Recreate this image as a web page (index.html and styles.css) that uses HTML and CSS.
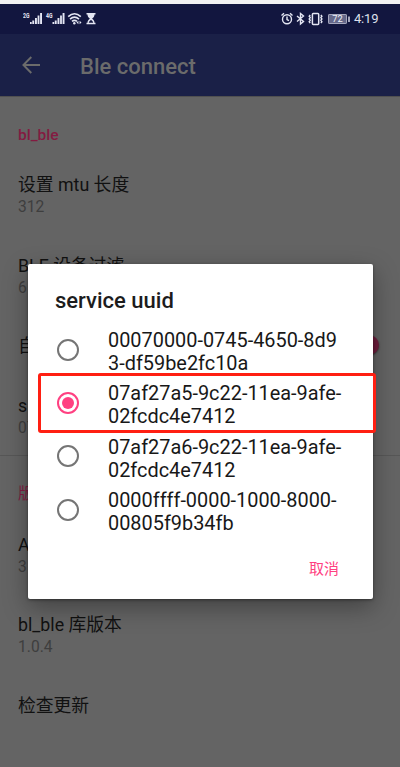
FILE: index.html
```html
<!DOCTYPE html>
<html lang="zh-CN">
<head>
<meta charset="utf-8">
<title>Ble connect</title>
<link rel="stylesheet" href="styles.css">
</head>
<body>
<div class="screen">
  <header class="status">
    <svg class="status-left" width="76" height="16" viewBox="0 0 76 16" fill="#e4e6f3">
      <text class="net" x="0" y="6.5" textLength="6.5" lengthAdjust="spacingAndGlyphs">2G</text>
      <path d="M7 11h1.700v2H7zM9.300 9.500h1.900V13H9.300zM12 7h1.900v6H12zM14.600 4.500h1.800V13h-1.800zM17.100 2H19v11h-1.900z"/>
      <text class="net" x="23" y="6.500" textLength="6.500" lengthAdjust="spacingAndGlyphs">4G</text>
      <path d="M29.500 11h1.700v2h-1.700zM31.800 9.500h1.900V13h-1.900zM34.500 7h1.900v6h-1.900zM37.100 4.500h1.800V13h-1.800zM39.600 2h1.900v11h-1.900z"/>
      <g fill="none" stroke="#e4e6f3" stroke-width="1.600"><path d="M45.200 5.700Q51.500-.2 57.800 5.700M47 8.200q4.500-4.200 9 0M49 10.400q2.500-2.200 5 0"/></g>
      <circle cx="51.300" cy="12.200" r="1.200"/><path d="M53.500 11.500l1.900-1.700v3.400zM58.500 11.500l-1.900-1.700v3.400z"/>
      <path d="M63.500 2h9v1.500h-1c0 2-1 3.100-2.400 4.200 1.500 1 2.400 2.100 2.400 4h1v1.500h-9v-1.500h1c0-1.900.9-3 2.400-4-1.400-1.100-2.400-2.200-2.400-4.200h-1z"/>
      <path fill="#12163f" d="M65.800 11.700c.2-1.300 1.100-1.900 2.200-2.700 1.100.8 2 1.400 2.200 2.700z"/>
    </svg>
    <svg class="status-right" width="70" height="16" viewBox="0 0 70 16" fill="none" stroke="#e4e6f3" stroke-width="1.400">
      <circle cx="6" cy="8.200" r="4.500"/><path d="M6 5.500v3l2 1.200M.5 4.500l2.500-2.300M11.500 4.500L9 2.200"/>
      <path d="M16 5l6.500 5.500-3 2.500V2.500l3 2.500L16 10.500"/>
      <rect x="31.400" y="2.600" width="6.300" height="10.800" rx=".8" stroke-width="1.500"/>
      <path d="M29.200 4l-1 1.300 1 1.300-1 1.400 1 1.300-1 1.400 1 1.300M39.900 4l1 1.300-1 1.300 1 1.400-1 1.300 1 1.400-1 1.300"/>
      <rect x="47.500" y="3.500" width="18" height="9" rx=".6" fill="#65688a" stroke="#a5a7bd" stroke-width="1"/>
      <path d="M68 5.500v5.500"/>
      <text class="charge" x="51.300" y="11.200" textLength="10.500" lengthAdjust="spacingAndGlyphs">72</text>
    </svg>
    <span class="clock">4:19</span>
  </header>
  <nav class="toolbar">
    <svg width="18" height="18" viewBox="0 0 18 18" fill="none" stroke="#6b6b6b" stroke-width="1.900"><path d="M18 9H1.500M9.300 1L1.400 9l7.900 8"/></svg>
    <h1>Ble connect</h1>
  </nav>
  <main class="settings">
    <h2 class="group">bl_ble</h2>
    <div class="row"><p>设置 mtu 长度</p><small>312</small></div>
    <div class="row"><p>BLE 设备过滤</p><small>6</small></div>
    <div class="row single"><p>自</p><i class="thumb"></i></div>
    <div class="row last"><p>s</p><small>07</small></div>
    <h2 class="group second">版</h2>
    <div class="row"><p>A</p><small>3</small></div>
    <div class="row"><p>bl_ble 库版本</p><small>1.0.4</small></div>
    <div class="row"><p>检查更新</p></div>
  </main>
  <section class="dialog" role="dialog">
    <h2>service uuid</h2>
    <div class="option"><i class="radio"></i><span>00070000-0745-4650-8d9<br>3-df59be2fc10a</span></div>
    <div class="option"><i class="radio checked"></i><span>07af27a5-9c22-11ea-9afe-<br>02fcdc4e7412</span></div>
    <div class="option"><i class="radio"></i><span>07af27a6-9c22-11ea-9afe-<br>02fcdc4e7412</span></div>
    <div class="option"><i class="radio"></i><span>0000ffff-0000-1000-8000-<br>00805f9b34fb</span></div>
    <button>取消</button>
    <div class="highlight"></div>
  </section>
</div>
</body>
</html>
```
FILE: styles.css
```css
* { box-sizing: border-box; }
body, h1, h2, p { margin: 0; }
body { font-family: Roboto, "Noto Sans CJK SC", sans-serif; }
.screen {
  position: relative;
  width: 400px;
  height: 767px;
  overflow: hidden;
  border-top: 4px solid #f1f1f2;
  background: #646464;
}
.status {
  display: flex;
  align-items: center;
  height: 30px;
  padding: 0 22px 0 23px;
  background: #12163f;
}
.status-right { margin-left: auto; }
.net { font-size: 6.5px; font-weight: 700; }
.charge { font-size: 9px; fill: #f0f1f8; stroke: none; }
.clock {
  width: 24px;
  margin-left: 3px;
  color: #dfe0ec;
  font-size: 13px;
  letter-spacing: -.2px;
  line-height: 18px;
  white-space: nowrap;
}
.toolbar {
  display: flex;
  align-items: center;
  gap: 40px;
  height: 62px;
  padding-left: 22px;
  background: #1a2047;
}
.toolbar h1 {
  padding-top: 3px;
  color: #6b6b6b;
  font-size: 22px;
  font-weight: 500;
  line-height: 30px;
}
.settings { padding-top: 26px; border-top: 1px solid #505050; }
.group {
  height: 48px;
  padding-left: 18px;
  color: #831b41;
  font-size: 15.5px;
  font-weight: 500;
  line-height: 24px;
}
.row {
  height: 80.6px;
  padding-left: 18px;
  color: #111;
}
.row p { font-size: 17.8px; line-height: 27px; }
.row small { display: block; color: #3e3e3e; font-size: 15.6px; line-height: 19.6px; }
.row.single {
  display: flex;
  justify-content: space-between;
  height: 60px;
  padding-right: 21px;
}
.thumb {
  width: 20px;
  height: 20px;
  margin-top: 3px;
  border-radius: 50%;
  background: #6f1d3c;
  box-shadow: 0 1px 2px #333;
}
.row.last { height: 64px; border-bottom: 1px solid #575757; }
.second { height: 74.4px; padding-top: 26px; font-weight: 400; }
.dialog {
  position: absolute;
  top: 260px;
  left: 28px;
  width: 345px;
  height: 335px;
  padding: 22px 0 0 27px;
  border-radius: 2px;
  background: #fff;
  box-shadow: 0 8px 24px rgba(0, 0, 0, .35), 0 1px 3px rgba(0, 0, 0, .4);
}
.dialog h2 {
  height: 39.4px;
  color: #1c1c1c;
  font-size: 22px;
  font-weight: 500;
  line-height: 29px;
}
.option {
  display: flex;
  align-items: center;
  gap: 29px;
  height: 53.4px;
  padding-left: 2px;
  color: #181818;
  font-size: 19.9px;
  line-height: 23.2px;
  white-space: nowrap;
}
.radio {
  display: grid;
  flex: none;
  place-items: center;
  width: 22px;
  height: 22px;
  margin-bottom: 5px;
  border: 2px solid #757575;
  border-radius: 50%;
}
.radio.checked { border-color: #ff4081; }
.radio.checked::after {
  width: 12px;
  height: 12px;
  border-radius: 50%;
  background: #ff4081;
  content: "";
}
.dialog button {
  display: block;
  margin: 17px 34px 0 auto;
  padding: 0;
  border: 0;
  background: none;
  color: #ff4081;
  font: 400 15px/24px "Noto Sans CJK SC", sans-serif;
}
.highlight {
  position: absolute;
  top: 109px;
  left: 10px;
  width: 338px;
  height: 60px;
  border: 3px solid #ff1f12;
  border-radius: 3px;
}
```
